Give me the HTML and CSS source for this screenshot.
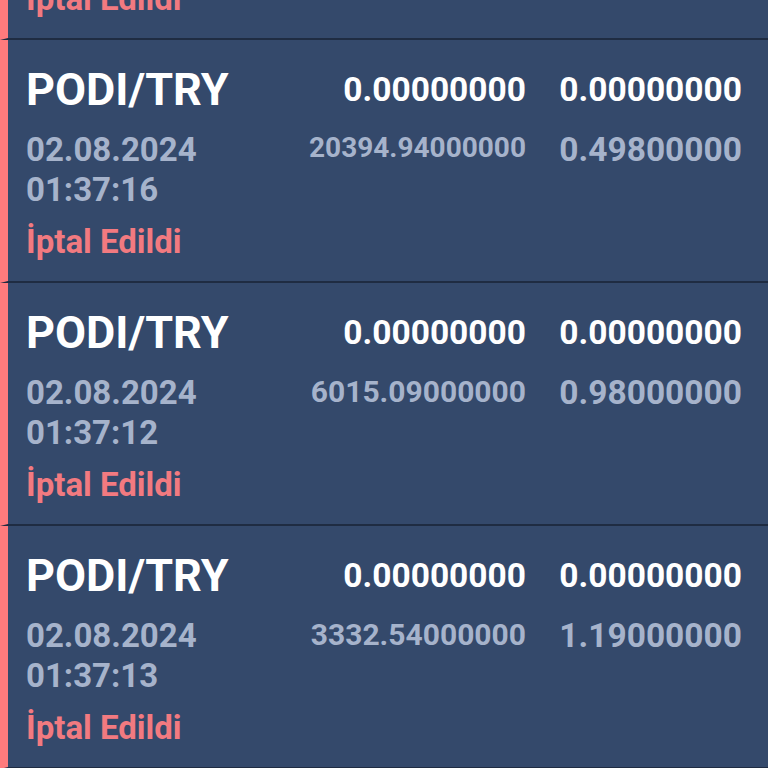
FILE: index.html
```html
<!DOCTYPE html>
<html>
<head>
	<meta charset="utf-8">
	<title>Emirler</title>
	<link rel="stylesheet" href="styles.css">
</head>
<body>
	<div class="orders">

		<div class="order">
			<div class="pair">PODI/TRY</div>
			<div class="num main">0.00000000</div>
			<div class="num main">0.00000000</div>
			<div class="when">02.08.2024<br>01:37:20</div>
			<div class="num sub">12000.00000000</div>
			<div class="num sub">0.50000000</div>
			<div class="status">İptal Edildi</div>
		</div><!-- / order -->

		<div class="order">
			<div class="pair">PODI/TRY</div>
			<div class="num main">0.00000000</div>
			<div class="num main">0.00000000</div>
			<div class="when">02.08.2024<br>01:37:16</div>
			<div class="num sub s28">20394.94000000</div>
			<div class="num sub">0.49800000</div>
			<div class="status">İptal Edildi</div>
		</div><!-- / order -->

		<div class="order">
			<div class="pair">PODI/TRY</div>
			<div class="num main">0.00000000</div>
			<div class="num main">0.00000000</div>
			<div class="when">02.08.2024<br>01:37:12</div>
			<div class="num sub s30">6015.09000000</div>
			<div class="num sub">0.98000000</div>
			<div class="status">İptal Edildi</div>
		</div><!-- / order -->

		<div class="order">
			<div class="pair">PODI/TRY</div>
			<div class="num main">0.00000000</div>
			<div class="num main">0.00000000</div>
			<div class="when">02.08.2024<br>01:37:13</div>
			<div class="num sub s30">3332.54000000</div>
			<div class="num sub">1.19000000</div>
			<div class="status">İptal Edildi</div>
		</div><!-- / order -->

	</div><!-- / orders -->
</body>
</html>
```

FILE: styles.css
```css
body{
	margin: 0;
	background: #34496b;
	font-family: Roboto, "Noto Sans", sans-serif;
	overflow: hidden;
}

.orders{
	margin-top: -203px;
}

.order{
	display: grid;
	grid-template-columns: 1fr 240px 216px;
	align-items: center;
	align-content: start;
	height: 243px;
	box-sizing: border-box;
	padding: 24px 26px 0 18px;
	border-left: 8px solid #ff7b7d;
	border-bottom: 2px solid #1f2c42;
	background: #34496b;
}

.pair{
	font-size: 45px;
	font-weight: 700;
	line-height: 52px;
	color: #ffffff;
}

.num{
	text-align: right;
	font-weight: 700;
}

.num.main{
	font-size: 33.5px;
	line-height: 52px;
	color: #ffffff;
}

.num.sub{
	align-self: start;
	margin-top: 14px;
	font-size: 33.5px;
	line-height: 40px;
	color: #a6b3cb;
}

.num.sub.s30{
	font-size: 30px;
	line-height: 37px;
}

.num.sub.s28{
	font-size: 28px;
	line-height: 36px;
}

.when{
	align-self: start;
	margin-top: 14px;
	font-size: 33px;
	font-weight: 700;
	line-height: 40px;
	color: #a6b3cb;
}

.status{
	grid-column: 1 / 4;
	align-self: start;
	margin-top: 12px;
	font-size: 33px;
	font-weight: 700;
	line-height: 40px;
	color: #f27a80;
}
```
